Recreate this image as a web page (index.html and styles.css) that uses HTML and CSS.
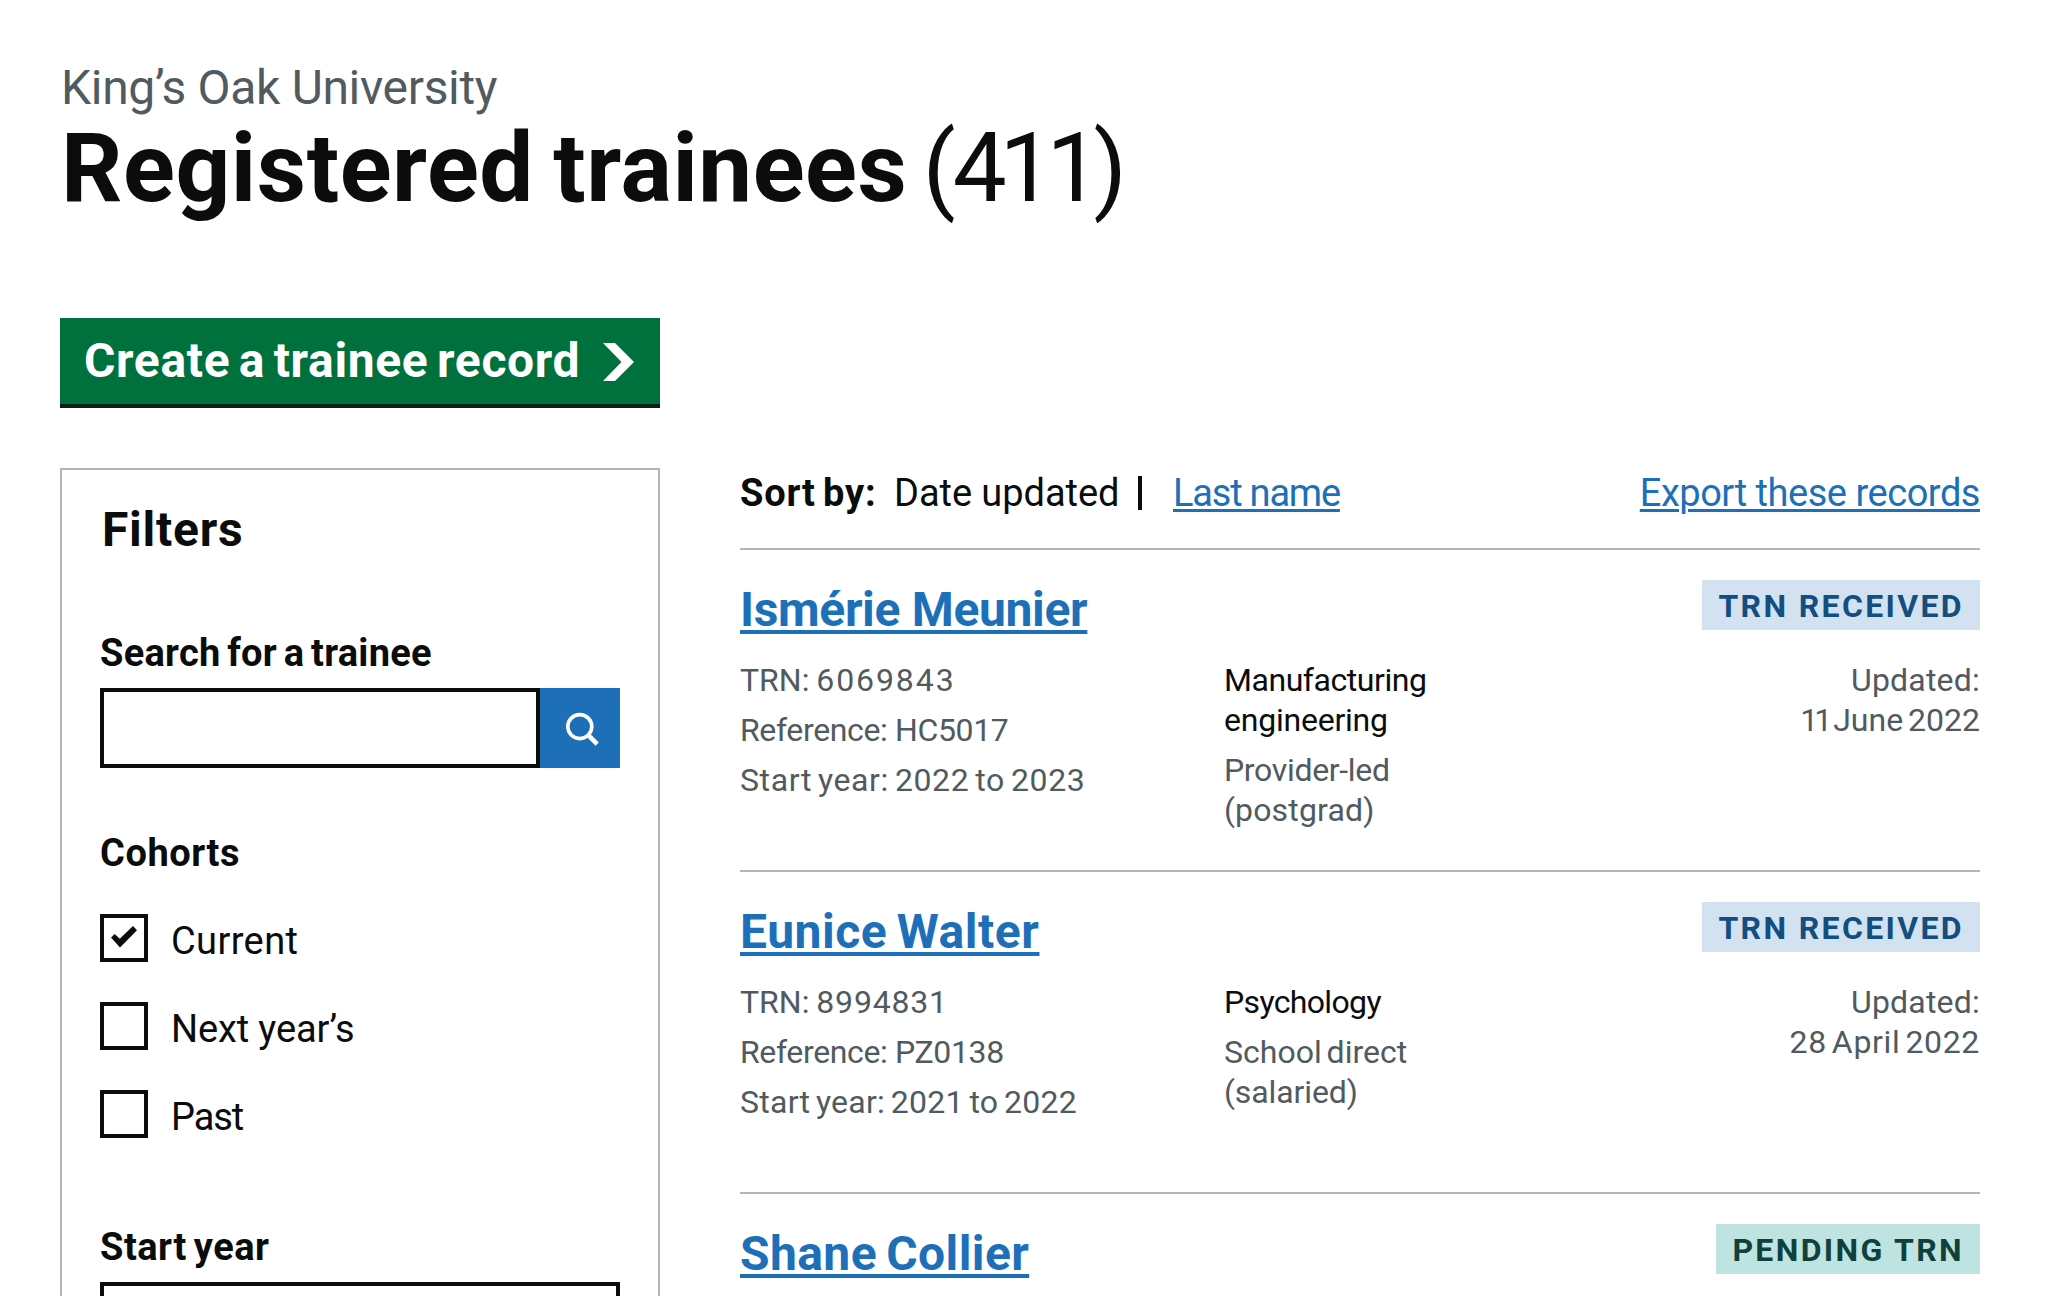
FILE: index.html
```html
<!DOCTYPE html>
<html lang="en">
<head>
<meta charset="utf-8">
<title>Registered trainees</title>
<link rel="stylesheet" href="styles.css">
</head>
<body>
<main class="page">
  <header class="heading">
    <p class="caption">King’s Oak University</p>
    <h1 class="title">Registered trainees <span class="count"><span class="paren">(</span>411<span class="paren">)</span></span></h1>
  </header>

  <a class="start-button">
    <span>Create a trainee record</span>
    <svg class="start-icon" viewBox="0 0 31 38" width="31" height="38" aria-hidden="true"><path d="M0 0h12l19 19-19 19H0l18.500-19z" fill="#fff"/></svg>
  </a>

  <div class="columns">
    <aside class="filters">
      <h2 class="filters-title">Filters</h2>

      <label class="field-label search-label">Search for a trainee</label>
      <div class="search">
        <div class="search-input"></div>
        <div class="search-button">
          <svg viewBox="0 0 80 80" width="80" height="80" aria-hidden="true"><circle cx="39.800" cy="38.600" r="12" fill="none" stroke="#fff" stroke-width="3.600"/><path d="M48.200 47.200l9 9" stroke="#fff" stroke-width="4.600"/></svg>
        </div>
      </div>

      <h3 class="field-label cohorts-label">Cohorts</h3>
      <ul class="checks">
        <li class="check"><span class="box"><svg viewBox="0 0 40 40" width="40" height="40" aria-hidden="true"><path d="M7 19.500l3.700-3.500 5.100 4.800L29 8l4 4.200-17 17.200z" fill="#0b0c0c"/></svg></span><span class="check-text fit-current">Current</span></li>
        <li class="check"><span class="box"></span><span class="check-text fit-next">Next year’s</span></li>
        <li class="check"><span class="box"></span><span class="check-text fit-past">Past</span></li>
      </ul>

      <label class="field-label year-label">Start year</label>
      <div class="select"></div>
    </aside>

    <section class="results">
      <div class="toolbar">
        <div class="sort">
          <b class="sort-label">Sort by:</b>
          <span class="sort-current">Date updated</span>
          <span class="divider"></span>
          <a class="link sort-link">Last name</a>
        </div>
        <a class="link export">Export these records</a>
      </div>

      <article class="record">
        <div class="record-head">
          <a class="name name-meunier">Ismérie Meunier</a>
          <span class="tag tag-blue">TRN RECEIVED</span>
        </div>
        <div class="record-body">
          <div class="ids">
            <p>TRN: <span class="digits">6069843</span></p>
            <p class="fit-ref">Reference: HC5017</p>
            <p class="fit-start">Start year: 2022 to 2023</p>
          </div>
          <div class="course">
            <p class="subject"><span class="fit-manu">Manufacturing</span><br><span class="fit-eng">engineering</span></p>
            <p class="route"><span class="fit-prov">Provider-led</span><br><span class="fit-post">(postgrad)</span></p>
          </div>
          <p class="updated"><span class="fit-upd">Updated:</span><br><span class="fit-june"><span class="ones">11</span> June 2022</span></p>
        </div>
      </article>

      <article class="record">
        <div class="record-head">
          <a class="name name-walter">Eunice Walter</a>
          <span class="tag tag-blue">TRN RECEIVED</span>
        </div>
        <div class="record-body">
          <div class="ids">
            <p>TRN: <span class="digits-one">8994831</span></p>
            <p class="fit-ref">Reference: PZ0138</p>
            <p class="fit-start-one">Start year: 2021 to 2022</p>
          </div>
          <div class="course">
            <p class="subject"><span class="fit-psy">Psychology</span></p>
            <p class="route"><span class="fit-school">School direct</span><br><span class="fit-salaried">(salaried)</span></p>
          </div>
          <p class="updated"><span class="fit-upd">Updated:</span><br><span class="fit-april">28 April 2022</span></p>
        </div>
      </article>

      <article class="record">
        <div class="record-head">
          <a class="name name-collier">Shane Collier</a>
          <span class="tag tag-turquoise">PENDING TRN</span>
        </div>
      </article>
    </section>
  </div>
</main>
</body>
</html>
```
FILE: styles.css
```css
* { box-sizing: border-box; margin: 0; padding: 0; }

html, body { height: 1296px; overflow: hidden; background: #fff; }

body {
  color: #0b0c0c;
  font-family: Roboto, "Liberation Sans", sans-serif;
  font-size: 38px;
  line-height: 50px;
}

.page { width: 2052px; height: 1296px; overflow: hidden; padding: 58px 72px 0 60px; }

.caption { padding-left: 1px; color: #505a5f; font-size: 48px; line-height: 60px; letter-spacing: -0.33px; }
.title { padding-left: 1px; font-size: 96px; line-height: 100px; font-weight: 700; letter-spacing: 0.55px; word-spacing: -5px; white-space: nowrap; }
.count { font-weight: 400; letter-spacing: -7px; margin-left: -4px; }
.paren { letter-spacing: -3px; }

.start-button {
  display: flex;
  align-items: center;
  justify-content: space-between;
  width: 600px;
  height: 90px;
  margin-top: 100px;
  padding: 0 26px 0 24px;
  border-bottom: 4px solid #002413;
  background: #00703c;
  color: #fff;
  font-size: 48px;
  line-height: 84px;
  font-weight: 700;
  letter-spacing: 0.65px;
  word-spacing: -4px;
}
.start-icon { display: block; margin-top: 2px; }

.columns { display: grid; grid-template-columns: 600px 1240px; column-gap: 80px; margin-top: 60px; }

.filters { height: 900px; border: 2px solid #b1b4b6; padding: 30px 38px 0; }
.filters-title { padding-left: 2px; font-size: 48px; line-height: 60px; letter-spacing: 0.75px; }
.field-label { display: block; font-size: 38px; line-height: 50px; font-weight: 700; word-spacing: -3px; }
.search-label { margin-top: 68px; letter-spacing: 0.27px; }
.search { display: flex; height: 80px; margin-top: 10px; }
.search-input { width: 440px; border: 4px solid #0b0c0c; }
.search-button { width: 80px; background: #1d70b8; }
.search-button svg { display: block; }

.cohorts-label { margin-top: 60px; letter-spacing: 0.54px; }
.checks { display: grid; row-gap: 40px; margin-top: 36px; list-style: none; }
.check { display: flex; height: 48px; }
.box { width: 48px; height: 48px; border: 4px solid #0b0c0c; }
.box svg { display: block; }
.check-text { padding: 3px 0 0 23px; line-height: 48px; }
.fit-current { letter-spacing: 0.38px; }
.fit-next { letter-spacing: -0.12px; }
.fit-past { letter-spacing: -1.1px; }
.year-label { margin-top: 84px; letter-spacing: 0.5px; }
.select { height: 80px; margin-top: 10px; border: 4px solid #0b0c0c; }

.toolbar { display: flex; justify-content: space-between; height: 80px; white-space: nowrap; }
.sort { display: flex; }
.sort-label { width: 154px; letter-spacing: 0.8px; word-spacing: -3px; }
.sort-current { width: 244px; letter-spacing: -0.05px; }
.divider { width: 4px; height: 34px; margin: 8px 31px 0 0; background: #0b0c0c; }
.link {
  color: #1d70b8;
  text-decoration: underline;
  text-decoration-thickness: 3px;
  text-underline-offset: 3px;
}
.sort-link { letter-spacing: -1.2px; }
.export { letter-spacing: -0.47px; }

.record { height: 322px; border-top: 2px solid #b1b4b6; padding-top: 30px; font-size: 32px; line-height: 40px; }
.record-head { display: flex; justify-content: space-between; align-items: flex-start; height: 60px; }
.name {
  color: #1d70b8;
  font-size: 48px;
  line-height: 60px;
  font-weight: 700;
  text-decoration: underline;
  text-decoration-thickness: 4px;
  text-underline-offset: 4px;
}
.name-meunier { letter-spacing: -0.33px; }
.name-walter { letter-spacing: 0.55px; word-spacing: -3px; }
.name-collier { letter-spacing: 0.4px; word-spacing: -3px; }

.tag {
  height: 50px;
  padding: 1px 16px 0;
  line-height: 50px;
  font-weight: 700;
  letter-spacing: 2.35px;
}
.tag-blue { background: #d2e2f1; color: #144e81; }
.tag-turquoise { background: #bfe3e0; color: #10403c; }

.record-body { display: grid; grid-template-columns: 484px 1fr auto; margin-top: 20px; color: #505a5f; }
.ids, .course { display: grid; row-gap: 10px; align-content: start; }
.subject { color: #0b0c0c; }
.updated { text-align: right; }

.digits { margin-left: -1px; letter-spacing: 1.9px; }
.digits-one { margin-left: -1px; letter-spacing: 0.8px; }
.fit-ref { letter-spacing: -0.36px; }
.fit-start { letter-spacing: 0.6px; word-spacing: -2.5px; }
.fit-start-one { letter-spacing: 0.25px; word-spacing: -2.5px; }
.fit-manu { letter-spacing: -0.45px; }
.fit-eng { letter-spacing: -0.23px; }
.fit-prov { letter-spacing: -0.32px; }
.fit-post { letter-spacing: 0.15px; }
.fit-psy { letter-spacing: -0.65px; }
.fit-school { letter-spacing: 0; word-spacing: -3px; }
.fit-salaried { letter-spacing: -0.1px; }
.fit-upd { letter-spacing: 0.2px; }
.fit-june { letter-spacing: 0; word-spacing: -3px; }
.ones { letter-spacing: -4px; }
.fit-april { letter-spacing: 0.65px; word-spacing: -3.5px; }
```
